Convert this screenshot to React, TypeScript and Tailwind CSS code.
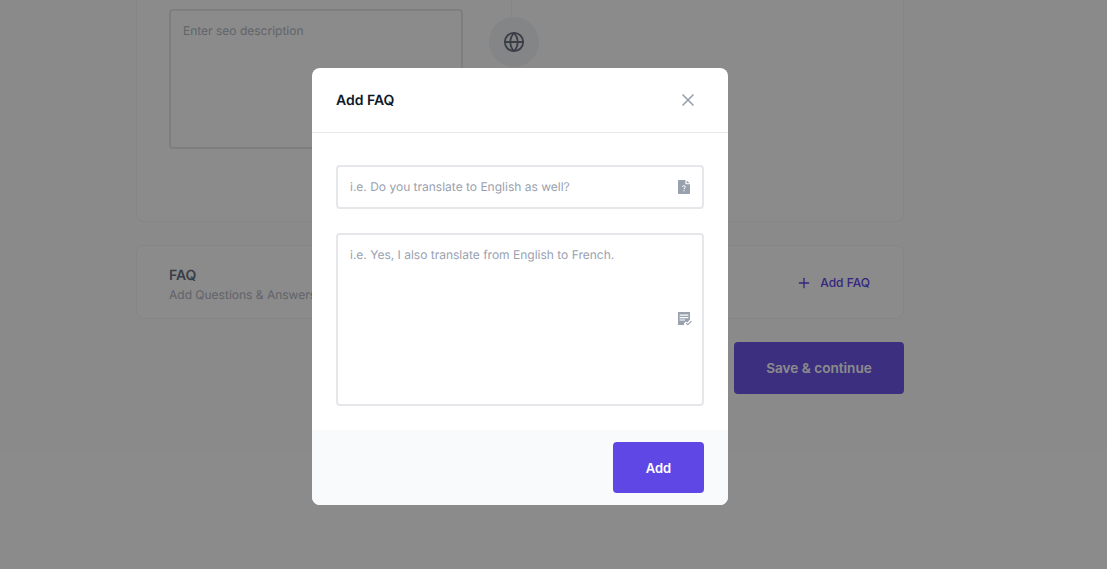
import { Globe, Plus, X } from "lucide-react";

function QuestionFileIcon({ className }: { className?: string }) {
  return (
    <svg className={className} viewBox="0 0 12 14" aria-hidden>
      <path fill="currentColor" d="M1 0H7.4V4.2H12V13C12 13.6 11.6 14 11 14H1C0.4 14 0 13.6 0 13V1C0 0.4 0.4 0 1 0Z" />
      <path fill="currentColor" d="M8.6 0.4L11.7 3.2H8.6Z" />
      <path
        fill="none"
        stroke="#fff"
        strokeWidth={1}
        d="M4.4 6.8C4.5 6.1 5.1 5.7 5.9 5.7C6.7 5.7 7.3 6.2 7.3 6.9C7.3 7.9 6 8 6 9.2M6 10.1V11.3"
      />
    </svg>
  );
}

function NotesCheckIcon({ className }: { className?: string }) {
  return (
    <svg className={className} viewBox="0 0 14 14" aria-hidden>
      <path fill="currentColor" d="M0 0H12V7.6L9.2 10.4L7.8 9.4L6 11.2V13H0Z" />
      <path fill="#fff" d="M1.6 2.6H10.4V3.8H1.6ZM1.6 5H10.4V6.2H1.6ZM1.6 7.4H7V8.6H1.6Z" />
      <path fill="none" stroke="currentColor" strokeWidth={1.1} d="M8.2 11.2L9.8 12.7L13.4 9.2" />
    </svg>
  );
}

export default function App() {
  return (
    <div className="relative h-[569px] overflow-hidden bg-white font-['Inter',sans-serif] antialiased [text-rendering:geometricPrecision]">
      <div className="h-[490px] bg-[#fdfdff]">
        <div className="-mt-[40px] ml-[136px] flex w-[768px] flex-col">
          <section className="flex h-[262px] rounded-lg border border-gray-100 bg-white pl-8">
            <div className="mt-[48px] h-[140px] w-[294px] rounded border-2 border-gray-200 px-3 py-3 text-xs leading-4 text-[#b3b7bf]">
              Enter seo description
            </div>
            <div className="relative ml-[48px] h-full w-px bg-gray-100">
              <div className="absolute left-[-22px] top-[56px] flex h-[50px] w-[50px] items-center justify-center rounded-full bg-gray-100 text-gray-500">
                <Globe className="h-[22px] w-[22px]" strokeWidth={2} />
              </div>
            </div>
          </section>

          <section className="mt-[23px] flex h-[74px] items-center justify-between rounded-lg border border-gray-100 bg-white pl-8 pr-[33px]">
            <div className="mt-[5px] flex flex-col gap-px">
              <h3 className="text-sm font-semibold leading-5 text-gray-500">FAQ</h3>
              <p className="text-xs leading-4 text-[#b3b7bf]">Add Questions &amp; Answers for Your Customers</p>
            </div>
            <button type="button" className="mt-[2px] flex items-center gap-2 text-xs font-medium text-[#6246ea]">
              <Plus className="h-4 w-4" strokeWidth={2} />
              Add FAQ
            </button>
          </section>

          <div className="mt-[23px] flex justify-end">
            <button type="button" className="h-[52px] w-[170px] rounded bg-[#6f56e9] text-[13.6px] font-semibold text-white">
              Save &amp; continue
            </button>
          </div>
        </div>
      </div>

      <div className="absolute inset-0 bg-black/[.455]">
        <div
          role="dialog"
          aria-modal="true"
          className="absolute left-[312px] top-[68px] w-[416px] overflow-hidden rounded-lg bg-white"
        >
          <header className="flex h-[65px] items-center justify-between border-b border-gray-200 pl-6 pr-[30px]">
            <h2 className="pt-[2px] text-sm font-semibold text-gray-900">Add FAQ</h2>
            <X className="h-5 w-5 text-gray-400" strokeWidth={2} />
          </header>

          <div className="flex flex-col gap-6 px-6 pb-6 pt-8">
            <div className="flex h-11 items-center justify-between rounded border-2 border-gray-200 pl-3 pr-3">
              <span className="text-xs text-gray-400">i.e. Do you translate to English as well?</span>
              <QuestionFileIcon className="h-[14px] w-3 text-gray-400" />
            </div>
            <div className="relative h-[173px] rounded border-2 border-gray-200 px-3 pb-3 pt-3">
              <span className="block text-xs leading-4 text-gray-400">i.e. Yes, I also translate from English to French.</span>
              <NotesCheckIcon className="absolute right-[10px] top-[77px] h-[14px] w-[14px] text-gray-400" />
            </div>
          </div>

          <footer className="flex h-[75px] items-start justify-end bg-gray-50 pr-6 pt-3">
            <button type="button" className="h-[51px] w-[91px] rounded bg-[#5f47e6] pt-[2px] text-[13px] font-semibold text-white">
              Add
            </button>
          </footer>
        </div>
      </div>
    </div>
  );
}
